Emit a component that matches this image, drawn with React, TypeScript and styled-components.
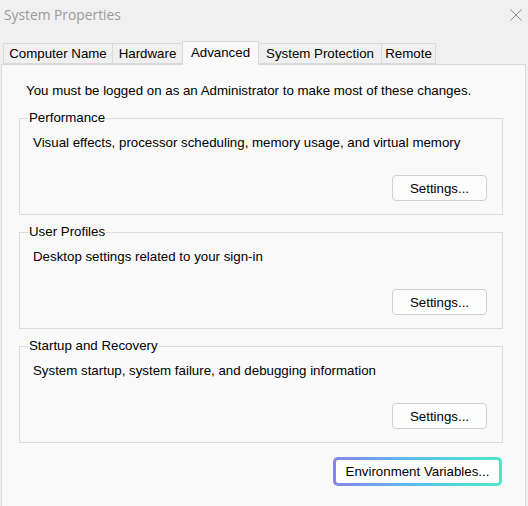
import React from "react";
import styled, { createGlobalStyle } from "styled-components";

const Global = createGlobalStyle`
  html, body { margin: 0; padding: 0; background: #f0f0f0; }
  body { font-family: "Liberation Sans", Arial, sans-serif; }
`;

const FS = "13.3px";

const Window = styled.div`
  width: 528px;
  height: 506px;
  overflow: hidden;
  background: #f0f0f0;
  display: flex;
  flex-direction: column;
  color: #000;
`;

const TitleBar = styled.div`
  height: 32px;
  flex: none;
  display: flex;
  align-items: center;
  justify-content: space-between;
  padding: 0 6px 2px 4px;
  box-sizing: border-box;
`;

const Title = styled.div`
  font-family: "Open Sans", "Noto Sans", sans-serif;
  font-size: 13.8px;
  color: #9b9b9b;
  line-height: 20px;
`;

const CloseButton = styled.div`
  width: 12px;
  height: 12px;
  display: flex;
`;

const TabStrip = styled.div`
  height: 32px;
  flex: none;
  display: flex;
  align-items: flex-end;
  padding-left: 3px;
`;

const Tab = styled.div<{ $w: number; $active?: boolean }>`
  box-sizing: border-box;
  width: ${(p) => p.$w}px;
  height: ${(p) => (p.$active ? 24 : 21)}px;
  margin-bottom: ${(p) => (p.$active ? -1 : 0)}px;
  margin-left: -1px;
  padding-bottom: ${(p) => (p.$active ? 2 : 0)}px;
  border: 1px solid #dadada;
  border-bottom: ${(p) => (p.$active ? "none" : "1px solid #dadada")};
  background: ${(p) => (p.$active ? "#f9f9f9" : "#f0f0f0")};
  position: relative;
  z-index: ${(p) => (p.$active ? 2 : 1)};
  display: flex;
  align-items: center;
  justify-content: center;
  font-size: ${FS};
  line-height: 16px;
  white-space: nowrap;
  &:first-child { margin-left: 0; }
`;

const Panel = styled.div`
  flex: 1;
  margin-left: 1px;
  width: 525px;
  box-sizing: border-box;
  border: 1px solid #dadada;
  background: #f9f9f9;
  padding: 18px 22px 0 17px;
  display: flex;
  flex-direction: column;
  margin-bottom: -1px;
`;

const Info = styled.div`
  font-size: ${FS};
  line-height: 16px;
  margin-left: 7px;
  white-space: nowrap;
`;

const Group = styled.section<{ $first?: boolean }>`
  margin-top: ${(p) => (p.$first ? 19 : 17)}px;
  border: 1px solid #dcdcdc;
  padding: 0 15px 13px 0;
  display: flex;
  flex-direction: column;
`;

const Legend = styled.div`
  align-self: flex-start;
  margin: -9px 0 0 8px;
  padding: 0 1px;
  background: #f9f9f9;
  font-size: ${FS};
  line-height: 16px;
  white-space: nowrap;
`;

const Description = styled.div`
  margin: 9px 0 0 13px;
  font-size: ${FS};
  line-height: 16px;
  white-space: nowrap;
`;

const Button = styled.button`
  align-self: flex-end;
  margin-top: 24px;
  width: 95px;
  height: 26px;
  box-sizing: border-box;
  border: 1px solid #d0d0d0;
  border-radius: 4px;
  background: #fdfdfd;
  font-family: "Liberation Sans", Arial, sans-serif;
  font-size: ${FS};
  color: #000;
  padding: 0;
`;

const AccentButton = styled.button`
  align-self: flex-end;
  margin: 14px 1px 0 0;
  width: 169px;
  height: 29px;
  box-sizing: border-box;
  border: 3px solid transparent;
  border-radius: 5px;
  background:
    linear-gradient(#ffffff, #ffffff) padding-box,
    linear-gradient(90deg, #8585e6 0%, #62b4ee 40%, #52d8dc 75%, #4fe6c6 100%) border-box;
  font-family: "Liberation Sans", Arial, sans-serif;
  font-size: ${FS};
  color: #000;
  padding: 0;
`;

const tabs = [
  { label: "Computer Name", w: 110 },
  { label: "Hardware", w: 71 },
  { label: "Advanced", w: 77, active: true },
  { label: "System Protection", w: 124 },
  { label: "Remote", w: 55 },
];

const groups = [
  { title: "Performance", text: "Visual effects, processor scheduling, memory usage, and virtual memory" },
  { title: "User Profiles", text: "Desktop settings related to your sign-in" },
  { title: "Startup and Recovery", text: "System startup, system failure, and debugging information" },
];

export default function App() {
  return (
    <Window>
      <Global />
      <TitleBar>
        <Title>System Properties</Title>
        <CloseButton>
          <svg width="12" height="12" viewBox="0 0 12 12">
            <path d="M0.5 0.5 L11.5 11.5 M11.5 0.5 L0.5 11.5" stroke="#8a8a8a" strokeWidth="1" fill="none" />
          </svg>
        </CloseButton>
      </TitleBar>
      <TabStrip>
        {tabs.map((t) => (
          <Tab key={t.label} $w={t.w} $active={t.active}>
            {t.label}
          </Tab>
        ))}
      </TabStrip>
      <Panel>
        <Info>You must be logged on as an Administrator to make most of these changes.</Info>
        {groups.map((g, i) => (
          <Group key={g.title} $first={i === 0}>
            <Legend>{g.title}</Legend>
            <Description>{g.text}</Description>
            <Button>Settings...</Button>
          </Group>
        ))}
        <AccentButton>Environment Variables...</AccentButton>
      </Panel>
    </Window>
  );
}
